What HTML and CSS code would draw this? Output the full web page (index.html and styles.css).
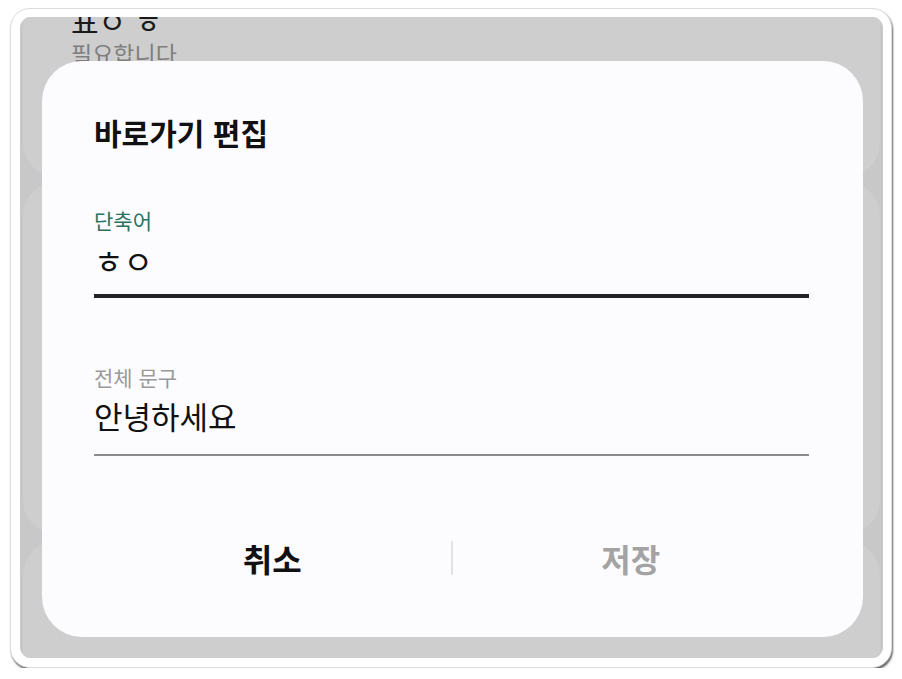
FILE: index.html
```html
<!DOCTYPE html>
<html lang="ko">
<head>
<meta charset="utf-8">
<title>바로가기 편집</title>
<link rel="stylesheet" href="styles.css">
</head>
<body>
<div class="frame">
  <div class="screen">
    <div class="bg-card bg-card-top">
      <div class="bg-title">표ㅇ ㅎ</div>
      <div class="bg-sub">필요합니다</div>
    </div>
    <div class="bg-card bg-card-mid"></div>
    <div class="bg-card bg-card-bottom"></div>

    <div class="dialog">
      <h1 class="dialog-title">바로가기 편집</h1>

      <div class="field field-active">
        <div class="field-label">단축어</div>
        <div class="field-value field-value-jamo">ㅎㅇ</div>
      </div>

      <div class="field field-plain">
        <div class="field-label">전체 문구</div>
        <div class="field-value">안녕하세요</div>
      </div>

      <div class="actions">
        <div class="btn btn-cancel">취소</div>
        <div class="divider"></div>
        <div class="btn btn-save">저장</div>
      </div>
    </div>
  </div>
</div>
</body>
</html>
```

FILE: styles.css
```css
* { box-sizing: border-box; }

html, body {
  margin: 0;
  padding: 0;
  background: #ffffff;
  font-family: "Noto Sans CJK KR", "Noto Sans", sans-serif;
}

.frame {
  margin: 8px 0 0 10px;
  width: 882px;
  height: 660px;
  padding: 8px 8px 9px 9px;
  background: #ffffff;
  border: 1px solid #dcdcdc;
  border-radius: 20px;
  box-shadow: 1px 2px 2px rgba(0, 0, 0, 0.6);
}

.screen {
  position: relative;
  width: 100%;
  height: 100%;
  background: #c8c8c8;
  border-radius: 11px;
  overflow: hidden;
}

.bg-card {
  position: absolute;
  left: 3px;
  right: 3px;
  background: #cecece;
  border-radius: 34px;
}

.bg-card-top {
  top: -40px;
  height: 200px;
  padding: 0 0 0 48px;
}

.bg-card-mid {
  top: 165px;
  height: 352px;
}

.bg-card-bottom {
  top: 524px;
  height: 200px;
}

.bg-title {
  margin-top: 28px;
  font-size: 30px;
  line-height: 30px;
  color: #1a1a1a;
}

.bg-sub {
  margin-top: 4px;
  font-size: 23px;
  line-height: 28px;
  color: #7e7e7e;
}

.dialog {
  position: absolute;
  left: 22px;
  top: 44px;
  width: 821px;
  height: 576px;
  background: #fcfcfe;
  border-radius: 40px;
  padding: 51px 54px 0 52px;
  display: flex;
  flex-direction: column;
}

.dialog-title {
  margin: 0;
  font-size: 30px;
  line-height: 40px;
  font-weight: 700;
  color: #111111;
}

.field-label {
  font-size: 21px;
  line-height: 26px;
  color: #9a9a9a;
}

.field-value {
  font-size: 31px;
  line-height: 38px;
  color: #111111;
}

.field-active {
  margin-top: 55px;
  padding-bottom: 15px;
  border-bottom: 4px solid #232323;
}

.field-active .field-label {
  color: #2b7361;
}

.field-value-jamo {
  margin-top: 8px;
  font-size: 32px;
}

.field-plain {
  margin-top: 66px;
  padding-bottom: 19px;
  border-bottom: 2px solid #8c8c8c;
}

.field-plain .field-value {
  margin-top: 7px;
}

.actions {
  margin-top: 82px;
  display: flex;
  align-items: center;
  height: 40px;
}

.btn {
  flex: 1;
  text-align: center;
  font-size: 32px;
  line-height: 40px;
  font-weight: 700;
}

.btn-cancel { color: #111111; }
.btn-save { color: #a3a3a3; }

.divider {
  width: 2px;
  height: 34px;
  background: #e2e2e4;
}
```
